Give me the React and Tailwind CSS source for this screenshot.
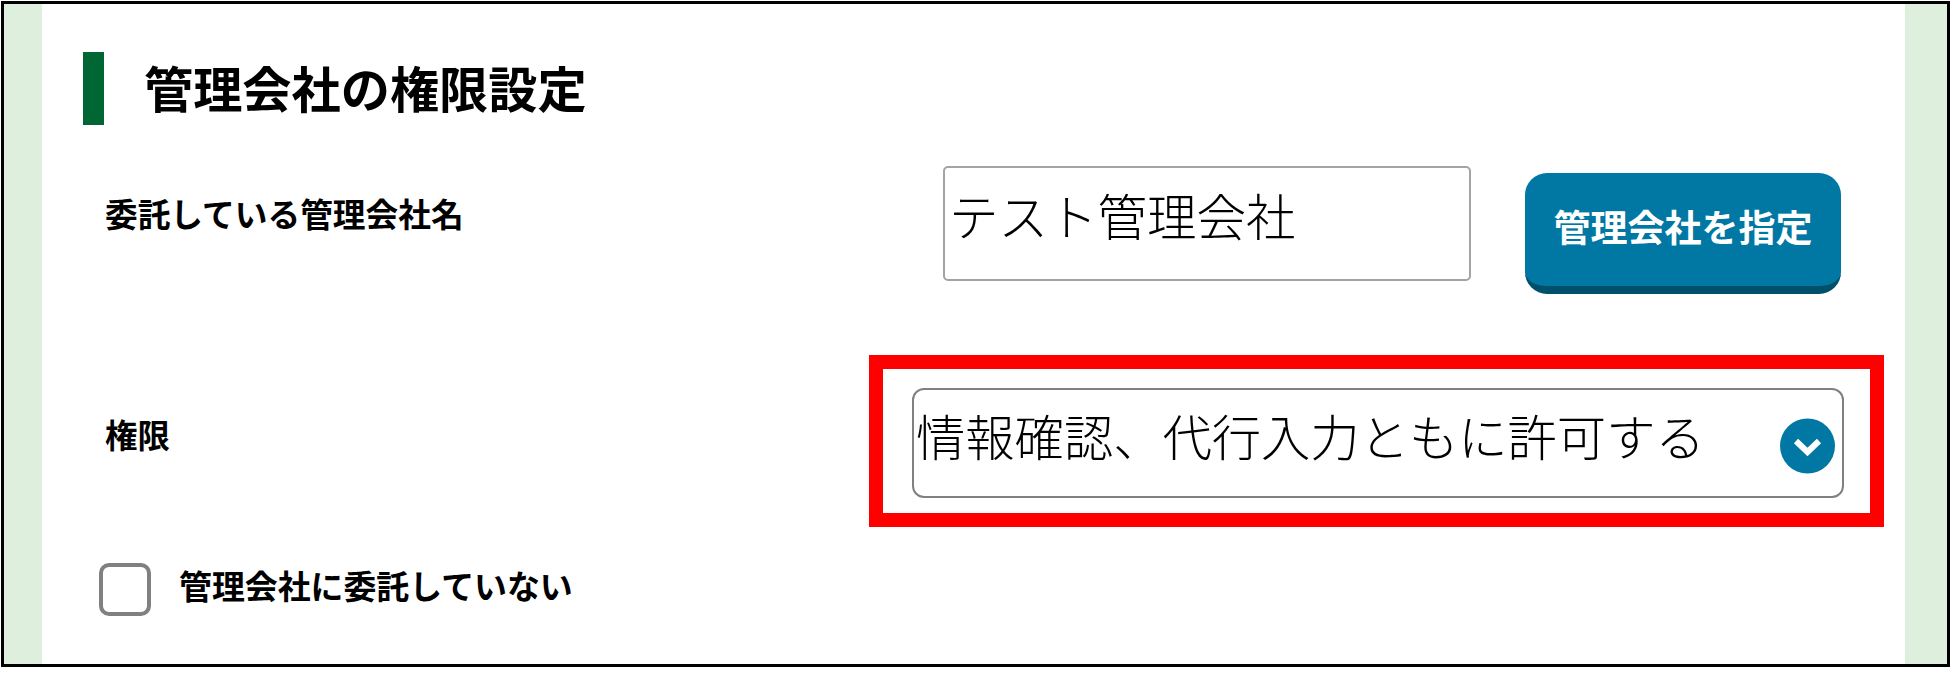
export default function App() {
  return (
    <div className="w-[1952px] h-[677px] bg-white pt-px pl-px font-['Noto_Sans_CJK_JP','Noto_Sans',sans-serif] text-black">
      <div className="w-[1949px] h-[666px] border-[3px] border-black flex">
        <div className="w-[38px] bg-[#deefdd]" />
        <div className="flex-1 bg-white pt-[48px]">
          {/* heading */}
          <div className="flex items-center ml-[41px]">
            <div className="w-[21px] h-[73px] bg-[#006633]" />
            <h1 className="ml-[40px] -mt-[5px] text-[49.2px] leading-[73px] font-bold">管理会社の権限設定</h1>
          </div>

          {/* company row */}
          <div className="flex items-start mt-[41px] pl-[63px]">
            <div className="w-[838px] mt-[23px] text-[32.7px] leading-[48px] font-semibold">委託している管理会社名</div>
            <div className="w-[528px] h-[115px] border-2 border-[#a3a3a3] rounded-[5px] pl-[4px] pt-[14px] text-[49.5px] leading-[66px] font-light">
              テスト管理会社
            </div>
            <button className="w-[316px] h-[121px] ml-[54px] mt-[7px] pb-[7px] rounded-[22px] bg-[#0078a3] border-b-8 border-[#00506c] text-white text-[37px] font-bold leading-[48px]">
              管理会社を指定
            </button>
          </div>

          {/* permission row */}
          <div className="flex items-start mt-[61px] pl-[63px]">
            <div className="w-[764px] mt-[55px] text-[32.5px] leading-[48px] font-semibold">権限</div>
            <div className="w-[1015px] h-[172px] border-[14px] border-[#ff0000] pl-[29px] pt-[19px]">
              <div className="w-[932px] h-[110px] border-2 border-[#808080] rounded-[12px] flex items-center justify-between pl-[2px] pr-[6px]">
                <span className="text-[49.3px] leading-[66px] font-light -mt-[16px]">情報確認、代行入力ともに許可する</span>
                <svg width="57" height="56" viewBox="0 0 57 56" className="mt-[5px]">
                  <circle cx="28.5" cy="28" r="27.5" fill="#0078a3" />
                  <path d="M17 23l11.5 11L40 23" fill="none" stroke="#fff" strokeWidth="6" />
                </svg>
              </div>
            </div>
          </div>

          {/* not delegated */}
          <div className="flex items-center mt-[36px] ml-[57px]">
            <div className="w-[52px] h-[53px] border-4 border-[#808080] rounded-[10px] bg-white" />
            <span className="ml-[28px] -mt-[9px] text-[32.9px] leading-[48px] font-semibold">管理会社に委託していない</span>
          </div>
        </div>
        <div className="w-[42px] bg-[#deefdd]" />
      </div>
    </div>
  );
}
